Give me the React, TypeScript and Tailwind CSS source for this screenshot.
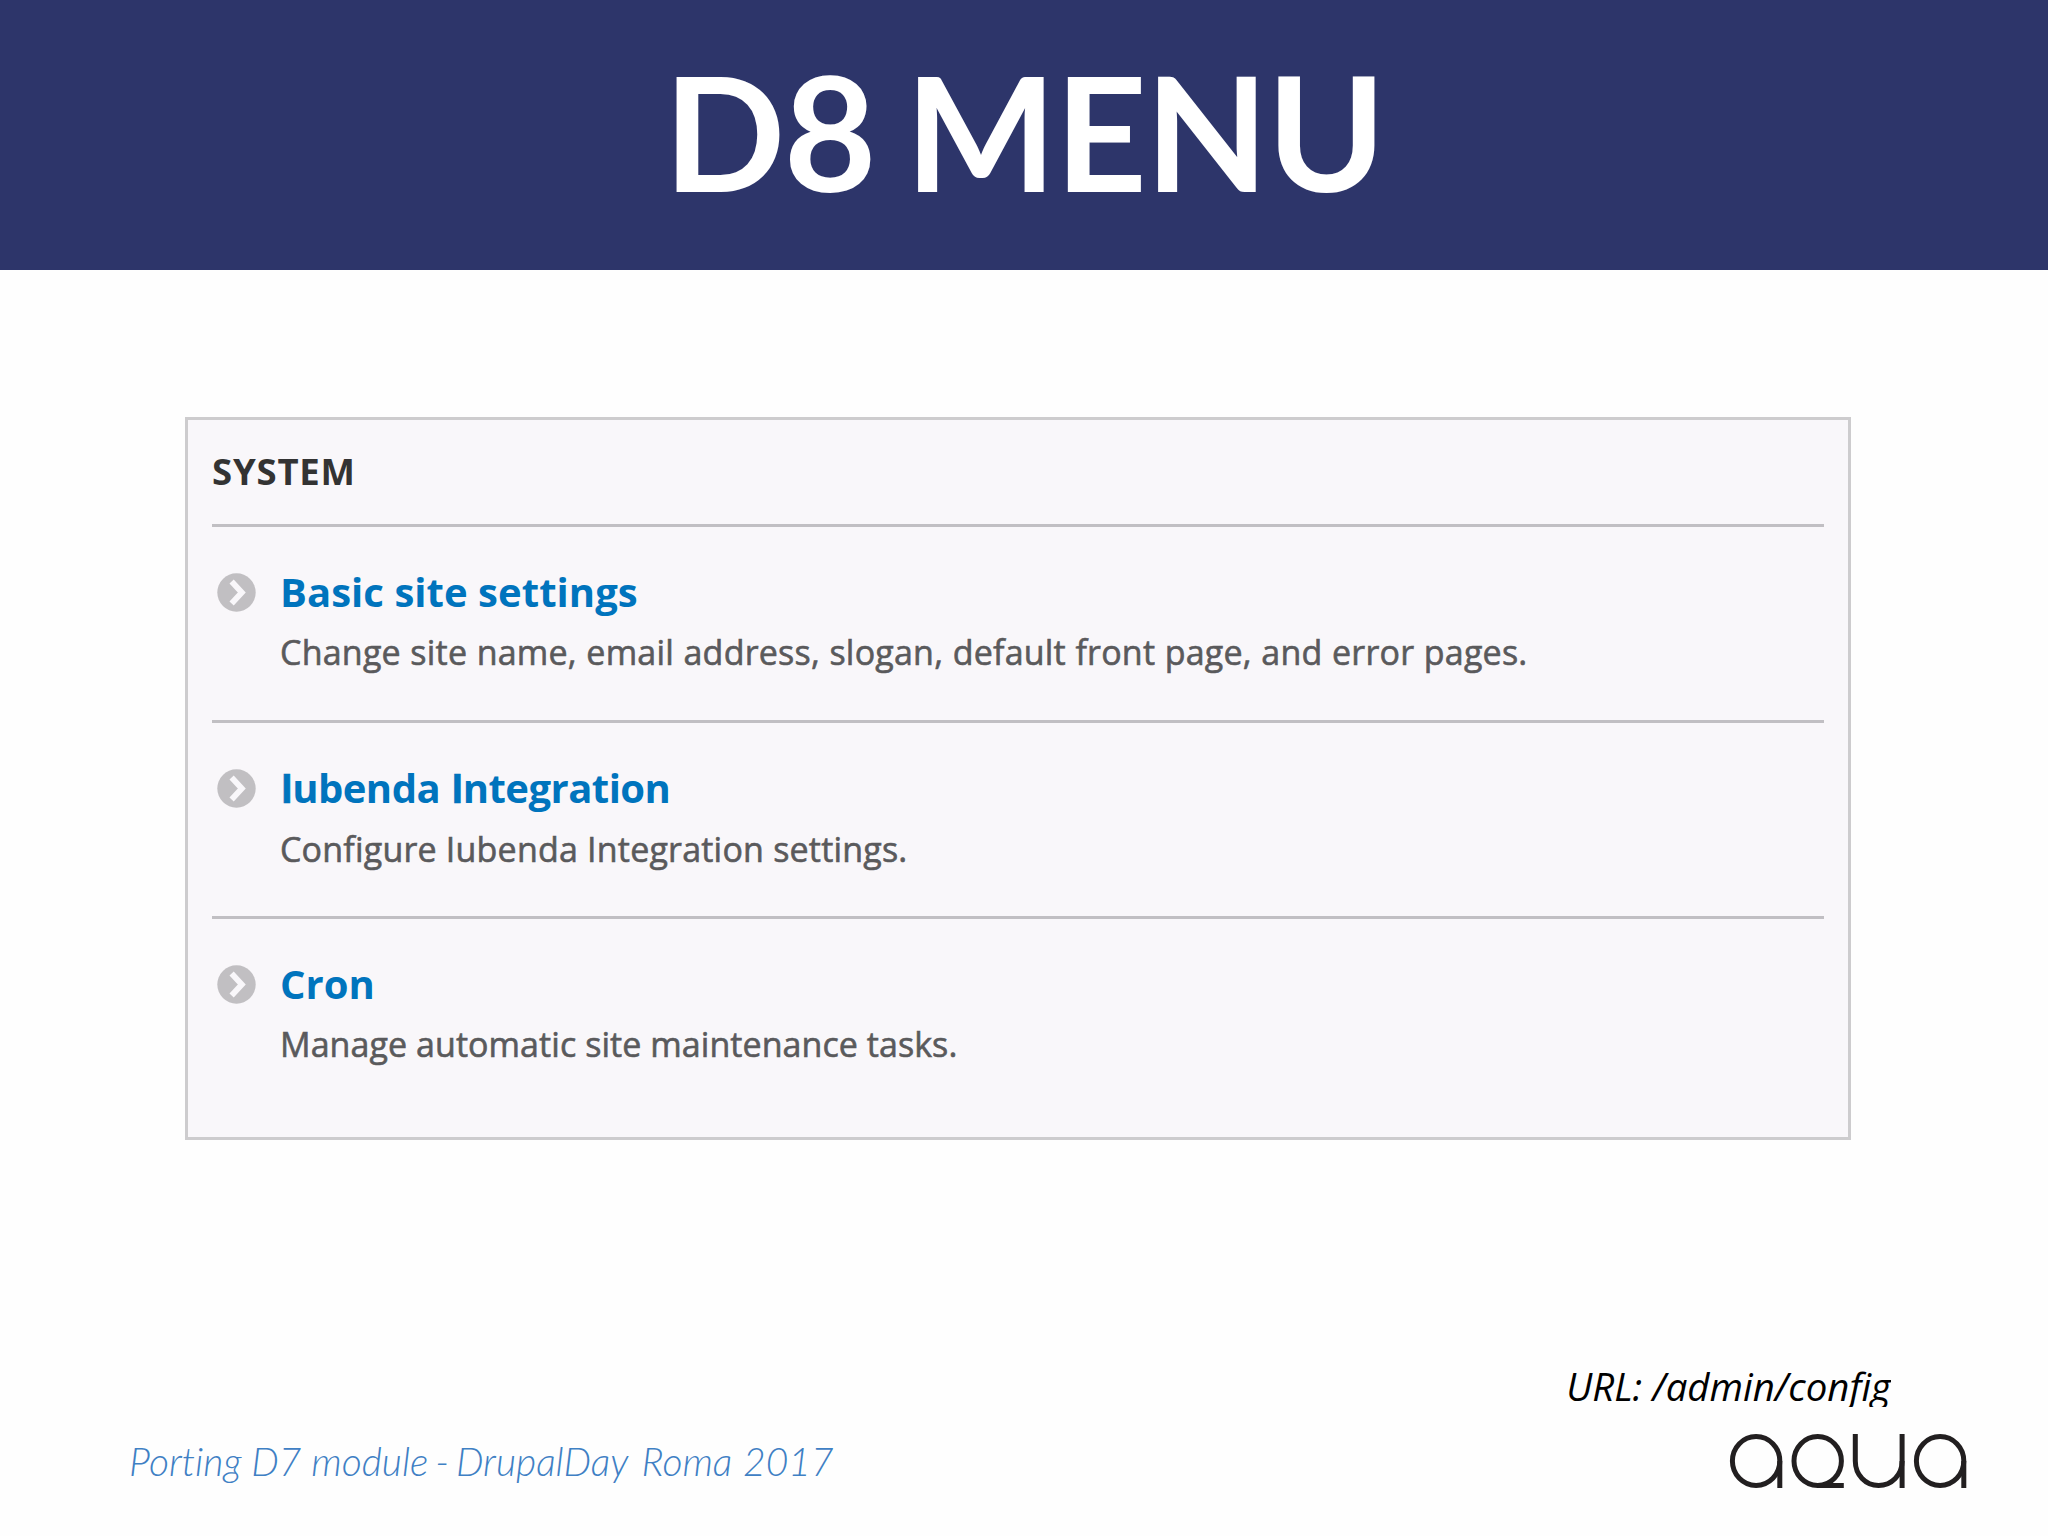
import type { ReactNode } from 'react';

type MenuItem = {
    id: string;
    title: ReactNode;
    titleClass: string;
    description: string;
    descriptionClass: string;
};

const menuItems: MenuItem[] = [
    {
        id: 'basic',
        title: 'Basic site settings',
        titleClass: 'tracking-[0.05px]',
        description: 'Change site name, email address, slogan, default front page, and error pages.',
        descriptionClass: 'tracking-[0.22px] [word-spacing:0.4px]',
    },
    {
        id: 'iubenda',
        title: (
            <>
                <PlainI />ubenda <PlainI />ntegration
            </>
        ),
        titleClass: 'ml-px tracking-[-0.52px] [word-spacing:1.6px]',
        description: 'Configure Iubenda Integration settings.',
        descriptionClass: '-mt-px tracking-[0.2px]',
    },
    {
        id: 'cron',
        title: 'Cron',
        titleClass: 'tracking-normal',
        description: 'Manage automatic site maintenance tasks.',
        descriptionClass: 'tracking-[0.06px]',
    },
];

function PlainI() {
    return <span className="font-[Roboto] [-webkit-text-stroke:0.6px_#0074bd]">I</span>;
}

function ChevronBadge() {
    return (
        <svg className="w-[39px] h-[39px] shrink-0" viewBox="0 0 39 39" fill="none">
            <circle cx="19.5" cy="19.5" r="19.2" fill="#c1bfc2" />
            <path d="M14.6 8.6 L24.8 19.5 L14.6 30.4" stroke="#f9f7fa" strokeWidth="5.8" />
        </svg>
    );
}

function AquaLogo() {
    return (
        <svg className="w-[238px] h-[56px]" viewBox="-0.6 -0.5 238 56" fill="none" stroke="#221f20" strokeWidth="5">
            <ellipse cx="26.5" cy="27.5" rx="23.7" ry="24.5" />
            <path d="M50.2 27.5 V54.5" />
            <ellipse cx="88.1" cy="27.5" rx="23.7" ry="24.5" />
            <path d="M88.1 52 H114.2" />
            <path d="M125.7 0.5 V27.5 C125.7 41.5 136 52 149 52 C162 52 172.5 41.5 172.5 27.5" />
            <path d="M172.5 0.5 V54.5" />
            <ellipse cx="210.5" cy="27.5" rx="23.7" ry="24.5" />
            <path d="M234.2 27.5 V54.5" />
        </svg>
    );
}

export default function App() {
    return (
        <div className="w-[2048px] h-[1536px] bg-[#fefefe] flex flex-col overflow-hidden">
            {/* Header */}
            <header className="h-[270px] shrink-0 bg-[#2d356a] flex justify-center pt-[49px]">
                <h1 className="font-[Lato] font-bold text-[160px] leading-[162px] tracking-[-1.6px] [word-spacing:-7px] text-white whitespace-nowrap">
                    D8 MENU
                </h1>
            </header>

            {/* System panel */}
            <section className='mt-[147px] ml-[185px] w-[1666px] h-[723px] shrink-0 border-3 border-[#cdccce] bg-[#f9f7fa] px-6 font-["Open_Sans",sans-serif]'>
                <h2 className="h-[104px] pt-[21px] text-[36.5px] leading-[60px] font-bold tracking-[0.8px] text-[#333333]">
                    SYSTEM
                </h2>
                <ul>
                    {menuItems.map((item) => (
                        <li key={item.id} className="h-[196px] border-t-3 border-[#c1bfc3] pt-[34px] pl-[5px] flex gap-6">
                            <div className="pt-[12px]">
                                <ChevronBadge />
                            </div>
                            <div className="pt-px whitespace-nowrap">
                                <h3 className={`text-[40px] leading-[60px] font-bold text-[#0074bd] ${item.titleClass}`}>
                                    {item.title}
                                </h3>
                                <p className={`text-[34px] leading-[61px] text-[#5a5a5c] [-webkit-text-stroke:0.6px_#5a5a5c] ${item.descriptionClass}`}>
                                    {item.description}
                                </p>
                            </div>
                        </li>
                    ))}
                </ul>
            </section>

            {/* Footer */}
            <footer className="flex-1 flex justify-between pl-[129px] pr-[81px]">
                <p className="pt-[291px] font-[Lato] font-light italic text-[39px] leading-[60px] [font-variant-ligatures:none] text-[#3f80c4] whitespace-nowrap">
                    Porting D7 module<span className="[word-spacing:-3px]"> - </span>DrupalDay
                    <span className="[word-spacing:3.5px]"> Roma</span>
                    <span className="[word-spacing:1px]"> 2017</span>
                </p>
                <div className="pt-[216px] flex flex-col items-end">
                    <p className='h-[51px] mr-[76px] overflow-hidden font-["Open_Sans",sans-serif] italic text-[38.4px] leading-[60px] text-black whitespace-nowrap'>
                        URL: /admin/config
                    </p>
                    <div className="mt-[26px]">
                        <AquaLogo />
                    </div>
                </div>
            </footer>
        </div>
    );
}
